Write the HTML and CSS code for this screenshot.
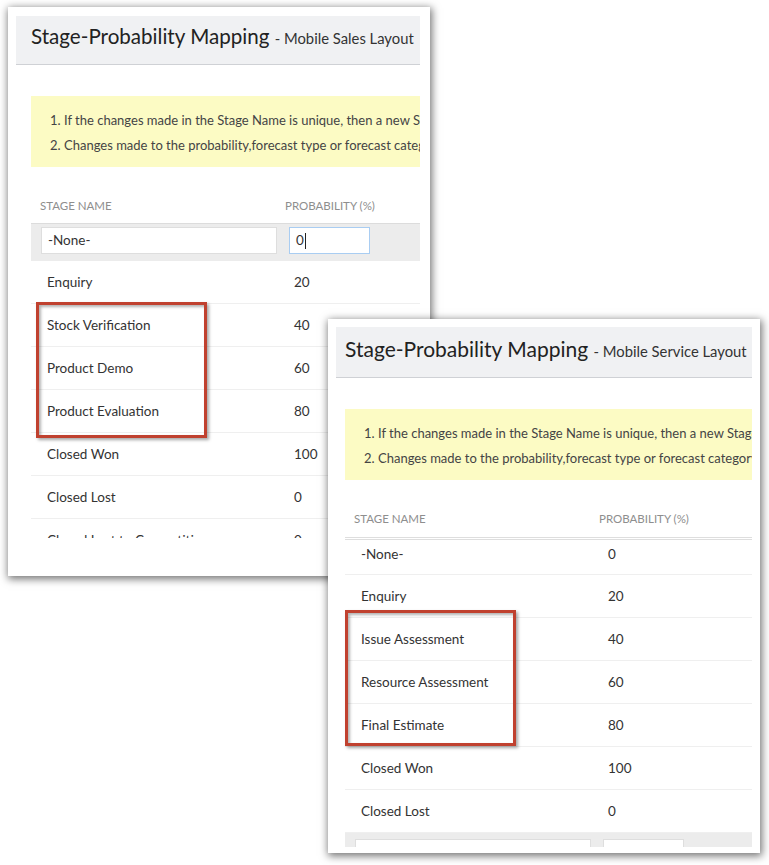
FILE: index.html
```html
<!DOCTYPE html>
<html>
<head>
<meta charset="utf-8">
<title>Stage-Probability Mapping</title>
<link rel="stylesheet" href="styles.css">
</head>
<body>
<div class="desk">
  <section class="win win-sales">
    <div class="viewport">
      <header class="win-head">
        <h1>Stage-Probability Mapping <span class="sub">- Mobile Sales Layout</span></h1>
      </header>
      <div class="win-body">
        <ol class="notice">
          <li>If the changes made in the Stage Name is unique, then a new Stage will be created.</li>
          <li>Changes made to the probability,forecast type or forecast category will be applied.</li>
        </ol>
        <div class="table">
          <div class="thead"><span>Stage Name</span><span>Probability (%)</span></div>
          <div class="edit-row">
            <div class="field name">-None-</div>
            <div class="field prob focus">0<i class="caret"></i></div>
          </div>
          <div class="row"><span>Enquiry</span><span>20</span></div>
          <div class="row"><span>Stock Verification</span><span>40</span></div>
          <div class="row"><span>Product Demo</span><span>60</span></div>
          <div class="row"><span>Product Evaluation</span><span>80</span></div>
          <div class="row"><span>Closed Won</span><span>100</span></div>
          <div class="row"><span>Closed Lost</span><span>0</span></div>
          <div class="row"><span>Closed Lost to Competition</span><span>0</span></div>
        </div>
      </div>
    </div>
    <div class="mark mark-sales"></div>
  </section>

  <section class="win win-service">
    <div class="viewport">
      <header class="win-head">
        <h1>Stage-Probability Mapping <span class="sub">- Mobile Service Layout</span></h1>
      </header>
      <div class="win-body">
        <ol class="notice">
          <li>If the changes made in the Stage Name is unique, then a new Stage will be created.</li>
          <li>Changes made to the probability,forecast type or forecast category will be applied.</li>
        </ol>
        <div class="table">
          <div class="thead"><span>Stage Name</span><span>Probability (%)</span></div>
          <div class="row first"><span>-None-</span><span>0</span></div>
          <div class="row"><span>Enquiry</span><span>20</span></div>
          <div class="row"><span>Issue Assessment</span><span>40</span></div>
          <div class="row"><span>Resource Assessment</span><span>60</span></div>
          <div class="row"><span>Final Estimate</span><span>80</span></div>
          <div class="row"><span>Closed Won</span><span>100</span></div>
          <div class="row"><span>Closed Lost</span><span>0</span></div>
          <div class="edit-row bottom">
            <div class="field name"></div>
            <div class="field prob"></div>
          </div>
        </div>
      </div>
    </div>
    <div class="mark mark-service"></div>
  </section>
</div>
</body>
</html>
```

FILE: styles.css
```css
* { box-sizing: border-box; }
html, body { margin: 0; padding: 0; background: #ffffff; }
body { font-family: Lato, "Open Sans", "Liberation Sans", sans-serif; color: #333; }

.desk {
  position: relative;
  width: 769px;
  height: 865px;
  overflow: hidden;
}

.win {
  position: absolute;
  background: #fff;
  box-shadow: 1px 2px 8px 1px rgba(0, 0, 0, 0.55);
}
.win-sales { left: 8px; top: 7px; width: 422px; height: 569px; padding: 9px 10px 0 8px; }
.win-service { left: 328px; top: 319px; width: 432px; height: 534px; padding: 8px 8px 0 8px; }

.viewport { overflow: hidden; position: relative; }
.win-sales .viewport { width: 404px; height: 522px; }
.win-service .viewport { width: 416px; height: 520px; }

.win-head {
  background: #f0f1f3;
  border-bottom: 1px solid #cfd1d5;
  display: flex;
  align-items: center;
  white-space: nowrap;
  padding-bottom: 8px;
}
.win-sales .win-head { height: 49px; padding-left: 15px; }
.win-service .win-head { height: 51px; padding-left: 9px; }

.win-head h1 {
  margin: 0;
  font-weight: 400;
  font-size: 21px;
  color: #222;
  letter-spacing: 0;
}
.win-sales .win-head h1 { font-size: 20.6px; }
.win-head .sub { font-size: 14.8px; color: #333; }

.win-body { width: 620px; padding-top: 31px; }
.win-sales .win-body { padding-left: 15px; }
.win-service .win-body { padding-left: 9px; }

.notice {
  margin: 0;
  background: #fcfbc4;
  padding: 12px 0 9px 33px;
  font-size: 13px;
  line-height: 25px;
  color: #444;
  white-space: nowrap;
}

.table { margin-top: 20px; }
.thead {
  display: grid;
  grid-template-columns: 245px 1fr;
  height: 37px;
  align-items: center;
  padding-left: 9px;
  font-size: 11.5px;
  text-transform: uppercase;
  color: #8e8e8e;
  border-bottom: 1px solid #dcdcdc;
}
.win-service .thead { height: 40px; border-bottom: 3px double #dedede; }

.row {
  display: grid;
  grid-template-columns: 247px 1fr;
  height: 43px;
  align-items: center;
  padding-left: 16px;
  font-size: 13.5px;
  color: #333;
  border-bottom: 1px solid #efefef;
  white-space: nowrap;
}
.row.first { height: 35px; padding-bottom: 7px; }

.edit-row {
  display: flex;
  background: #ececec;
  height: 37px;
  padding: 3px 0 0 10px;
  gap: 12px;
  align-items: flex-start;
}
.edit-row.bottom { padding-top: 6px; height: 30px; }
.field {
  background: #fff;
  border: 1px solid #dedede;
  height: 27px;
  padding: 0 6px;
  font-size: 13.5px;
  line-height: 25px;
  color: #333;
  display: flex;
  align-items: center;
}
.field.name { width: 236px; }
.field.prob { width: 81px; }
.field.focus { border-color: #a9cdf2; }
.caret {
  display: inline-block;
  width: 1px;
  height: 16px;
  background: #222;
  margin-left: 1px;
}

.mark {
  position: absolute;
  border: 3px solid #c0412f;
  box-shadow: 2px 2px 3px rgba(0, 0, 0, 0.35), inset 2px 2px 3px rgba(0, 0, 0, 0.3);
}
.mark-sales { left: 28px; top: 295px; width: 171px; height: 136px; }
.mark-service { left: 17px; top: 291px; width: 171px; height: 136px; }
```
